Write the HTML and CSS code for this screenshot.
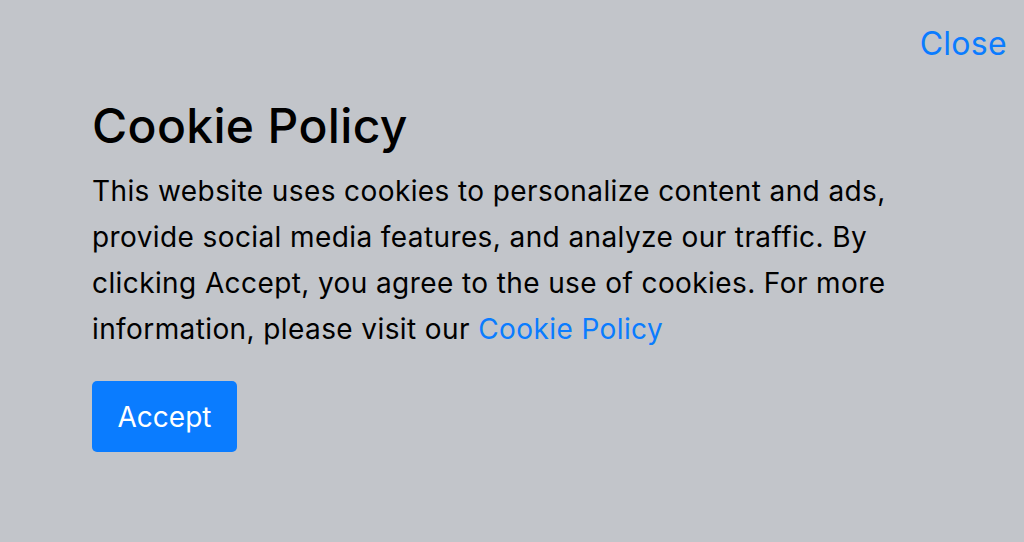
FILE: index.html
```html
<!DOCTYPE html>
<html lang="en">
<head>
<meta charset="utf-8">
<link rel="stylesheet" href="styles.css">
<title>Cookie Policy</title>
</head>
<body>
<div class="page">
  <div class="topbar"><a class="close" href="#">Close</a></div>
  <div class="content">
    <h1 class="title">Cookie Policy</h1>
    <p class="text">This website uses cookies to personalize content and ads, provide social media features, and analyze our traffic. By clicking Accept, you agree to the use of cookies. For more information, please visit our <a class="link" href="#">Cookie Policy</a></p>
    <button class="accept">Accept</button>
  </div>
</div>
</body>
</html>
```
FILE: styles.css
```css
html, body {
  margin: 0;
  padding: 0;
  background: #c2c5ca;
  height: 100%;
}
body {
  font-family: Inter, "Noto Sans", sans-serif;
  color: #000;
}
.page {
  width: 1024px;
  height: 542px;
  box-sizing: border-box;
}
.topbar {
  display: flex;
  justify-content: flex-end;
  padding: 22px 17px 0 0;
  height: 44px;
}
.close {
  color: #0a7cff;
  text-decoration: none;
  font-size: 32px;
  line-height: 44px;
  letter-spacing: 0.3px;
}
.content {
  padding-left: 92px;
  width: 840px;
}
.title {
  margin: 30px 0 0 0;
  font-size: 48px;
  font-weight: 500;
  line-height: 60px;
  letter-spacing: 0.35px;
}
.text {
  margin: 12px 0 0 0;
  font-size: 28px;
  line-height: 46px;
  letter-spacing: 0.4px;
}
.link {
  color: #0a7cff;
  text-decoration: none;
}
.accept {
  margin-top: 29px;
  width: 145px;
  height: 71px;
  background: #0a7cff;
  color: #fff;
  border: none;
  border-radius: 5px;
  font-family: inherit;
  font-size: 28px;
  padding: 0;
}
```
